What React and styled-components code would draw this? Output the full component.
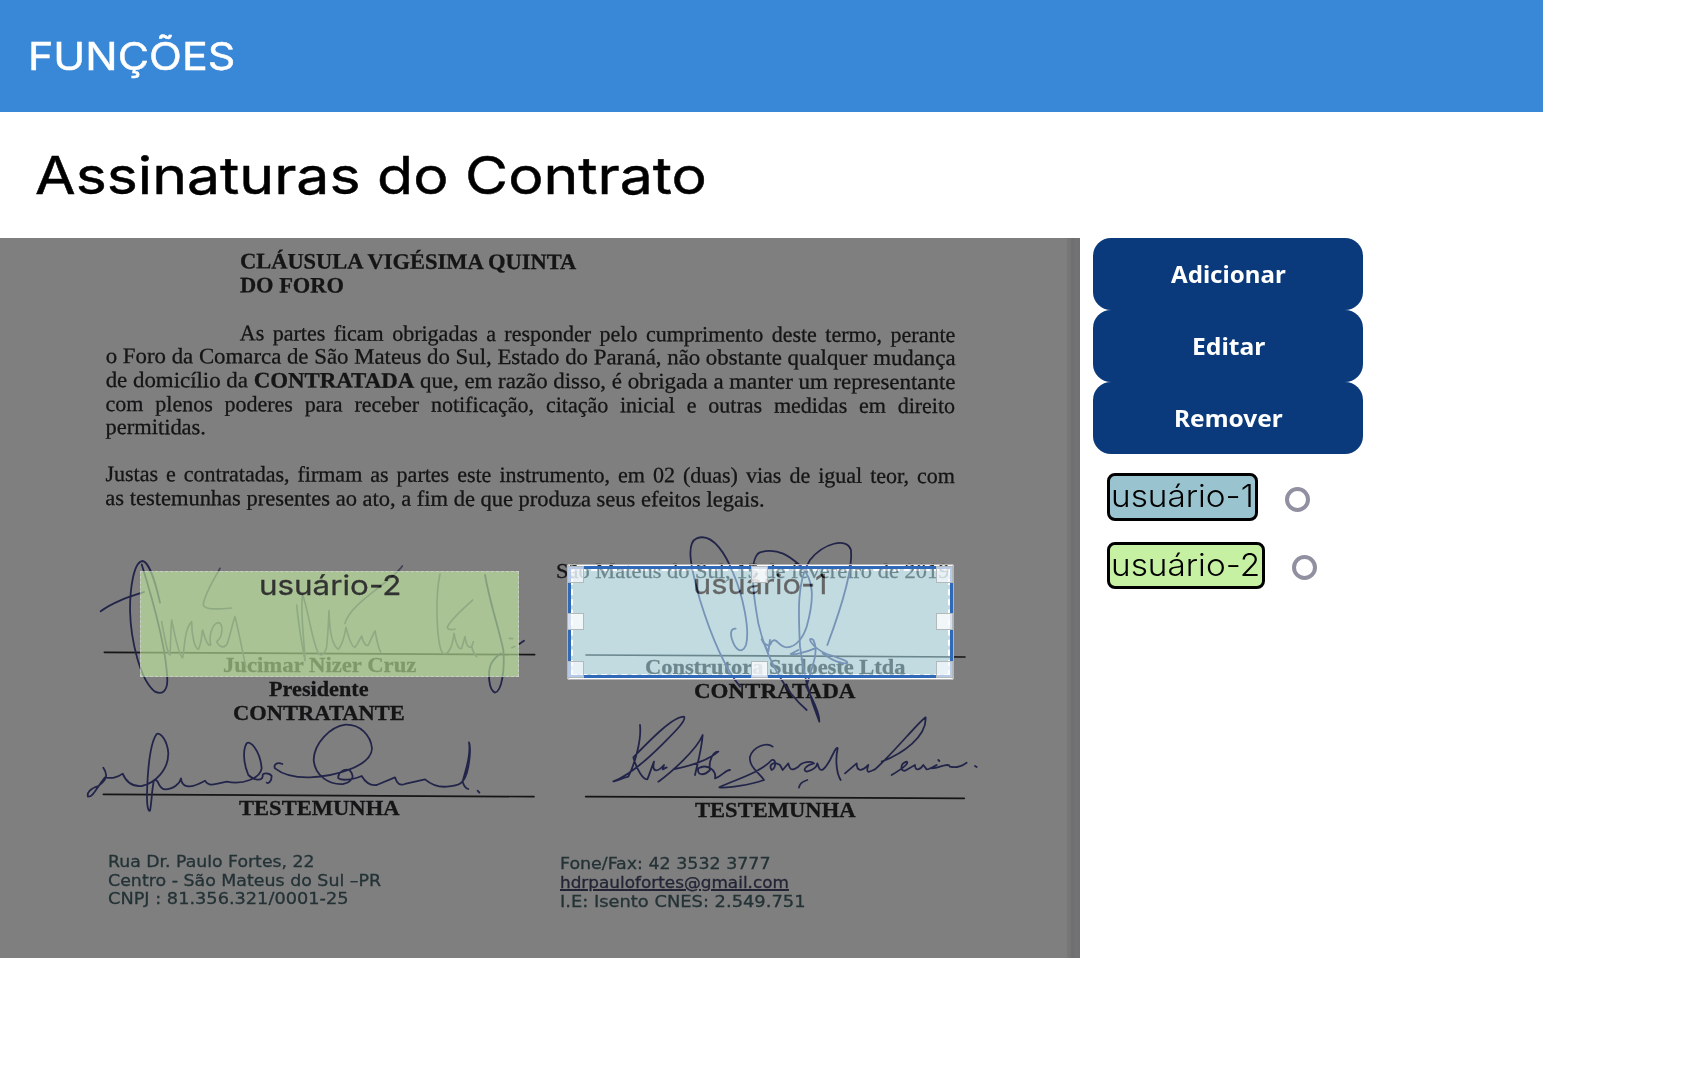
import React, { useLayoutEffect, useRef, useState } from "react";
import styled, { createGlobalStyle, css } from "styled-components";

const GlobalStyle = createGlobalStyle`
  *, *::before, *::after { box-sizing: border-box; }
  body { margin: 0; background: #fff; overflow: hidden; }
`;

const display = css`
  font-family: Inter, "Open Sans", sans-serif;
`;

/* ---------- text that fills a known measure ---------- */

const Measure = styled.span`
  display: inline-block;
  width: ${(p) => p.$width}px;
  flex: none;
  text-align: left;
`;

const Glyphs = styled.span`
  display: inline-block;
  white-space: nowrap;
  transform-origin: left center;
`;

function Fit({ width, children }) {
  const ref = useRef(null);
  const [scale, setScale] = useState(1);
  useLayoutEffect(() => {
    setScale(width / ref.current.offsetWidth);
  }, [width]);
  return (
    <Measure $width={width}>
      <Glyphs ref={ref} style={{ transform: `scaleX(${scale})` }}>
        {children}
      </Glyphs>
    </Measure>
  );
}

/* ---------- page ---------- */

const Header = styled.header`
  ${display}
  width: 1543px;
  height: 112px;
  padding-left: 27.5px;
  background: #3987d7;
  color: #fff;
  font-size: 38.5px;
  font-weight: 400;
  line-height: 112px;
  -webkit-text-stroke: 0.5px #fff;
`;

const Title = styled.h1`
  ${display}
  height: 126px;
  margin: 0;
  padding-left: 35px;
  color: #000;
  font-size: 52px;
  font-weight: 400;
  line-height: 127.5px;
  -webkit-text-stroke: 0.5px #000;
`;

const Workspace = styled.main`
  display: flex;
  gap: 13px;
`;

/* ---------- contract sheet ---------- */

const Sheet = styled.section`
  position: relative;
  width: 1080px;
  height: 720px;
  overflow: hidden;
  background: linear-gradient(
    to right,
    #fefefe 1066px,
    #e8e8ea 1069px,
    #f0f0f2 1070px,
    #dcdce0 1072px,
    #e6e6ec 1076px,
    #e2e2e6 1080px
  );
`;

const Scan = styled.div`
  width: 1080px;
  height: 720px;
  padding-top: 11.8px;
  color: #2a2a2d;
  font: 22px/23.6px "Liberation Serif", "Times New Roman", serif;
  -webkit-text-stroke: 0.3px currentColor;
  filter: blur(0.4px);
`;

const Clause = styled.div`
  width: 849.5px;
  height: 259.6px;
  margin-left: 106px;
  transform: rotate(0.14deg);
  transform-origin: left top;
`;

const Heading = styled.div`
  height: 47.2px;
  margin-top: -1px;
  padding: 0 0 1px 134px;
  font-weight: 700;
  white-space: nowrap;
`;

const Line = styled.div`
  height: 23.6px;
  margin-top: ${(p) => (p.$gap ? 23.6 : 0)}px;
  padding-left: ${(p) => (p.$indent ? 134 : 0)}px;
  white-space: nowrap;
`;

const FirstLine = styled(Line)`
  margin-top: 24.6px;
  padding-left: 134px;
  white-space: normal;
  text-align: justify;
  text-align-last: justify;
`;

const FullLine = styled(Line)`
  white-space: normal;
  text-align: justify;
  text-align-last: justify;
`;

const DateLine = styled.div`
  height: 23.6px;
  margin-top: 50.4px;
  padding-left: 556px;
`;

const Signers = styled.div`
  display: flex;
  height: 269.6px;
`;

const SignerColumn = styled.div`
  display: flex;
  flex-direction: column;
  align-items: center;
  width: ${(p) => p.$width}px;
  padding-top: ${(p) => p.$top}px;
  font-weight: 700;
  line-height: 23.7px;
`;

const Witness = styled.div`
  margin-top: ${(p) => p.$gap}px;
`;

const Contacts = styled.footer`
  display: flex;
  padding-left: 108px;
  color: #47646b;
  font: 16.2px/18.8px "DejaVu Sans", Verdana, sans-serif;
`;

const ContactColumn = styled.div`
  display: flex;
  flex-direction: column;
  width: 451.5px;
  padding-top: ${(p) => p.$top}px;
`;

const Email = styled.span`
  color: #45496b;
  text-decoration: underline;
  text-decoration-thickness: 1.6px;
`;

const Ink = styled.svg`
  position: absolute;
  inset: 0;
  fill: none;
  stroke-linecap: round;
  stroke-linejoin: round;
  filter: blur(0.4px);
`;

/* ---------- marks laid over the sheet ---------- */

const CropWindow = styled.div`
  position: absolute;
  left: 566.5px;
  top: 326px;
  width: 387px;
  height: 115.5px;
  border: 1px solid #b4b4b4;
  border-radius: 3px;
  box-shadow: 0 0 0 1600px rgba(0, 0, 0, 0.5);
`;

const Field = styled.div`
  ${display}
  position: absolute;
  left: ${(p) => p.$x}px;
  top: ${(p) => p.$y}px;
  width: ${(p) => p.$w}px;
  height: ${(p) => p.$h}px;
  border: ${(p) => p.$edge}px dashed #fff;
  background: ${(p) => p.$color};
  color: #000;
  font-size: 27.6px;
  font-weight: 400;
  line-height: 27px;
  text-align: center;
  opacity: 0.6;
  -webkit-text-stroke: 0.3px #000;
`;

const Outline = styled.div`
  position: absolute;
  left: 568px;
  top: 328px;
  width: 384.5px;
  height: 112px;
  border: 3px solid #2f69b8;
`;

const Handle = styled.i`
  position: absolute;
  left: ${(p) => p.$x}px;
  top: ${(p) => p.$y}px;
  width: 17px;
  height: 17px;
  border: 1px solid #b3b8bb;
  background: rgba(252, 252, 255, ${(p) => (p.$corner ? 0.66 : 0.8)});
`;

/* ---------- side panel ---------- */

const Panel = styled.aside`
  width: 270px;
`;

const ActionButton = styled.button`
  display: flex;
  align-items: center;
  justify-content: center;
  width: 270px;
  height: 72px;
  padding: 0 0 2px;
  border: 0;
  border-radius: 18px;
  background: #0a3a7b;
  color: #fff;
  font: 700 24px "Noto Sans", "Open Sans", sans-serif;
`;

const Users = styled.ul`
  display: flex;
  flex-direction: column;
  gap: 21px;
  margin: 19px 0 0 14px;
  padding: 0;
  list-style: none;
`;

const User = styled.li`
  display: flex;
  align-items: center;
  gap: 27px;
`;

const Tag = styled.span`
  ${display}
  height: 47.5px;
  padding: 0 1px;
  border: 3.5px solid #000;
  border-radius: 8px;
  background: ${(p) => p.$color};
  color: #000;
  font-size: 31px;
  font-weight: 300;
  line-height: 40px;
`;

const Radio = styled.input`
  appearance: none;
  width: 25px;
  height: 25px;
  margin: 5px 0 0;
  border: 4px solid #9090a0;
  border-radius: 50%;
  background: #fff;
`;

const users = [
  { name: "usuário-1", color: "#99c4cf", measure: 143 },
  { name: "usuário-2", color: "#c6f1a2", measure: 149.5 },
];

const actions = [
  { label: "Adicionar", measure: 114.5 },
  { label: "Editar", measure: 73 },
  { label: "Remover", measure: 109 },
];

const handles = [
  [567, 328, true],
  [751, 328, false],
  [935.5, 328, true],
  [567, 375, false],
  [935.5, 375, false],
  [567, 423, true],
  [751, 423, false],
  [935.5, 423, true],
];

const faintStrokes = [
  "M420 115 C400 150 370 200 370 225 C375 240 410 238 455 234",
  "M245 275 C255 330 262 370 270 375 C272 340 272 300 275 270 C285 320 300 380 308 383 C315 350 312 300 335 275 C335 320 345 355 355 358 C365 340 365 310 368 300 C375 330 385 350 392 345 C385 310 400 280 415 278 C430 280 430 320 410 335 C420 355 435 355 442 340 C455 300 460 270 465 260 C475 300 485 350 497 410",
  "M650 225 C655 280 665 340 675 392 C672 320 660 240 668 195 C685 240 695 330 715 370 C725 380 735 372 740 350 C745 300 746 270 747 242 C748 290 755 345 775 358 C790 340 795 310 798 292 C805 320 815 350 825 352 C835 340 840 325 845 318 C850 340 858 350 865 345 C875 325 880 310 885 303 C890 330 895 355 902 366",
  "M967 108 C930 160 810 220 795 280",
  "M1080 132 C1065 200 1070 330 1085 365 C1095 380 1115 370 1122 310 C1128 340 1135 360 1145 355 L1155 320 C1158 345 1165 355 1175 350 L1180 335 M1175 348 C1178 365 1185 375 1190 380",
  "M1178 210 C1150 235 1105 275 1102 293 C1105 300 1115 300 1125 297",
  "M1288 325 l10 1 M1295 353 l10 -4",
];

const leftStrokes = [
  "M62 244 C100 215 150 200 192 186",
  "M240 218 C225 150 205 95 188 93 C160 95 150 180 150 240 C152 330 180 450 225 485 C245 495 262 485 262 450 C260 380 240 280 185 103",
  "M1215 135 C1230 220 1255 290 1270 360 C1275 420 1265 485 1245 488 C1225 480 1225 430 1230 410 C1235 390 1250 380 1262 370 M1318 342 l14 -10",
  "M70 713 C85 735 80 750 55 768 C30 775 20 790 24 800 C40 800 45 780 75 742 C95 745 110 745 128 731 C140 760 160 770 185 768 C225 760 265 720 265 670 C262 630 240 605 230 612 C210 640 203 720 201 790 C200 830 205 845 210 842 C215 820 215 780 222 750 C240 745 230 775 255 778 C280 778 300 760 303 745 C305 770 325 780 375 752 C385 770 400 765 440 755 C490 765 540 745 545 715 C540 660 510 630 500 640 C488 660 490 700 505 735 C520 750 545 755 548 740 C545 725 570 730 575 738 C575 755 565 762 560 758",
  "M607 702 C590 695 580 705 585 715 C610 735 650 743 690 742 C760 740 875 710 876 655 C872 615 840 583 797 584 C750 590 702 640 701 690 C705 740 750 765 790 762 C820 755 825 735 808 720 C790 715 772 730 775 745 C790 755 830 745 845 738 C855 755 870 768 890 765 L945 742 C950 760 960 768 975 762 L1035 748 C1055 765 1075 772 1100 770 C1135 768 1155 765 1165 710 C1170 680 1172 650 1167 637 C1175 680 1150 740 1148 755 C1152 770 1158 775 1165 777 M1193 782 l5 6",
];

const rightStrokes = [
  "M600 500 C560 450 520 370 480 240 C455 150 435 70 470 55 C520 35 560 110 580 160 C610 230 630 330 618 375 C605 405 585 390 575 355 C570 335 575 325 587 326",
  "M800 570 C740 520 680 420 655 310 C635 200 630 110 660 97 C720 80 755 115 785 140 C820 180 825 230 800 320 C790 350 770 382 740 382 C715 380 710 350 695 365 C690 385 675 375 665 358 L685 395 L690 360",
  "M862 375 C890 300 940 160 933 90 C920 50 850 70 810 120 C770 180 775 280 780 380 C790 470 820 560 838 605 C840 570 805 520 800 500 C810 450 840 400 820 360 C800 345 810 380 860 402 C900 415 930 425 920 430 C895 432 860 410 848 400 M825 385 C790 400 760 405 752 402 L775 390",
  "M300 615 C305 660 285 730 265 770 C245 775 225 785 220 784 C260 770 310 730 370 670 C410 630 440 600 432 590 C400 590 340 650 280 712 C290 750 310 780 322 778 C330 760 335 740 342 725 C335 755 350 760 372 735 L368 748 L380 742",
  "M355 785 C390 760 470 690 488 645 C485 690 470 740 465 765 M400 748 C440 740 500 725 535 695 C520 695 505 720 510 750 C490 770 470 765 475 745 C500 730 530 750 525 775 C545 770 555 750 570 750",
  "M698 680 C680 665 640 680 630 710 C625 740 660 760 672 780 C630 795 560 805 538 802 C580 780 660 760 695 720 C710 715 708 745 695 750 C685 735 700 722 720 735 L728 750 L745 730 C750 755 760 750 775 740 C785 725 815 722 822 730 C800 735 785 750 800 755 C820 750 830 740 832 730 C840 760 850 755 870 720 C885 690 890 680 893 685 C885 720 890 760 902 780 M802 780 C785 785 778 795 777 803",
  "M915 760 L950 730 C950 755 965 755 985 735 C975 765 990 755 1005 748 C1060 700 1140 600 1157 592 C1160 650 1090 700 1025 725 M1055 765 C1080 750 1110 730 1100 725 C1080 730 1080 755 1095 752 L1125 735 C1125 755 1140 750 1150 735 L1160 748 C1165 750 1180 740 1190 735 M1195 720 l3 3 M1175 745 C1200 745 1225 725 1230 740 C1250 745 1270 735 1280 728 M1305 738 l5 3",
];

function Signatures() {
  return (
    <Ink width="1080" height="720" viewBox="0 238 1080 720">
      <g transform="translate(80 530) scale(0.33333)">
        <path d="M73 367 L1364 374 M70 793 L1362 800" stroke="#2a2a2d" strokeWidth="5" />
        <g stroke="#454b92" strokeWidth="5.4">
          {leftStrokes.map((d) => (
            <path key={d} d={d} />
          ))}
        </g>
        <g stroke="#7c82ac" strokeWidth="5">
          {faintStrokes.map((d) => (
            <path key={d} d={d} />
          ))}
        </g>
      </g>
      <g transform="translate(540 520) scale(0.33333)">
        <path d="M138 405 L1275 411 M137 830 L1273 835" stroke="#2a2a2d" strokeWidth="5" />
        <g stroke="#454b92" strokeWidth="5.4">
          {rightStrokes.map((d) => (
            <path key={d} d={d} />
          ))}
        </g>
      </g>
    </Ink>
  );
}

function Contract() {
  return (
    <Sheet>
      <Scan>
        <Clause>
          <Heading>
            <Fit width={336}>CLÁUSULA VIGÉSIMA QUINTA</Fit>
            <br />
            <Fit width={104}>DO FORO</Fit>
          </Heading>
          <FirstLine>As partes ficam obrigadas a responder pelo cumprimento deste termo, perante</FirstLine>
          <Line><Fit width={849.5}>o Foro da Comarca de São Mateus do Sul, Estado do Paraná, não obstante qualquer mudança</Fit></Line>
          <Line><Fit width={849.5}>de domicílio da <b>CONTRATADA</b> que, em razão disso, é obrigada a manter um representante</Fit></Line>
          <FullLine>com plenos poderes para receber notificação, citação inicial e outras medidas em direito</FullLine>
          <Line><Fit width={100}>permitidas.</Fit></Line>
          <FullLine $gap>Justas e contratadas, firmam as partes este instrumento, em 02 (duas) vias de igual teor, com</FullLine>
          <Line><Fit width={659}>as testemunhas presentes ao ato, a fim de que produza seus efeitos legais.</Fit></Line>
        </Clause>
        <DateLine><Fit width={399}>São Mateus do Sul, 15 de fevereiro de 2019.</Fit></DateLine>
        <Signers>
          <SignerColumn $width={638} $top={70.8}>
            <Fit width={193}>Jucimar Nizer Cruz</Fit>
            <Fit width={100}>Presidente</Fit>
            <Fit width={172}>CONTRATANTE</Fit>
            <Witness $gap={71.5}><Fit width={160}>TESTEMUNHA</Fit></Witness>
          </SignerColumn>
          <SignerColumn $width={273} $top={73}>
            <Fit width={260}>Construtora Sudoeste Ltda</Fit>
            <Fit width={161}>CONTRATADA</Fit>
            <Witness $gap={94.8}><Fit width={160}>TESTEMUNHA</Fit></Witness>
          </SignerColumn>
        </Signers>
        <Contacts>
          <ContactColumn $top={0.8}>
            <Fit width={206}>Rua Dr. Paulo Fortes, 22</Fit>
            <Fit width={273}>Centro - São Mateus do Sul –PR</Fit>
            <Fit width={240}>CNPJ : 81.356.321/0001-25</Fit>
          </ContactColumn>
          <ContactColumn $top={3.4}>
            <Fit width={211}>Fone/Fax: 42 3532 3777</Fit>
            <Fit width={229}><Email>hdrpaulofortes@gmail.com</Email></Fit>
            <Fit width={245}>I.E: Isento CNES: 2.549.751</Fit>
          </ContactColumn>
        </Contacts>
      </Scan>
      <Signatures />
      <CropWindow />
      <Field $x={140} $y={332.5} $w={379} $h={106.5} $edge={1} $color={users[1].color}>
        <Fit width={142}>usuário-2</Fit>
      </Field>
      <Field $x={570.5} $y={330.5} $w={379.5} $h={107} $edge={2} $color={users[0].color}>
        <Fit width={135}>usuário-1</Fit>
      </Field>
      <Outline />
      {handles.map(([x, y, corner]) => (
        <Handle key={`${x}-${y}`} $x={x} $y={y} $corner={corner} />
      ))}
    </Sheet>
  );
}

export default function App() {
  return (
    <>
      <GlobalStyle />
      <Header><Fit width={207.5}>FUNÇÕES</Fit></Header>
      <Title><Fit width={672}>Assinaturas do Contrato</Fit></Title>
      <Workspace>
        <Contract />
        <Panel>
          {actions.map((a) => (
            <ActionButton key={a.label} type="button">
              <Fit width={a.measure}>{a.label}</Fit>
            </ActionButton>
          ))}
          <Users>
            {users.map((u) => (
              <User key={u.name}>
                <Tag $color={u.color}><Fit width={u.measure}>{u.name}</Fit></Tag>
                <Radio type="radio" name="usuario" aria-label={u.name} />
              </User>
            ))}
          </Users>
        </Panel>
      </Workspace>
    </>
  );
}
